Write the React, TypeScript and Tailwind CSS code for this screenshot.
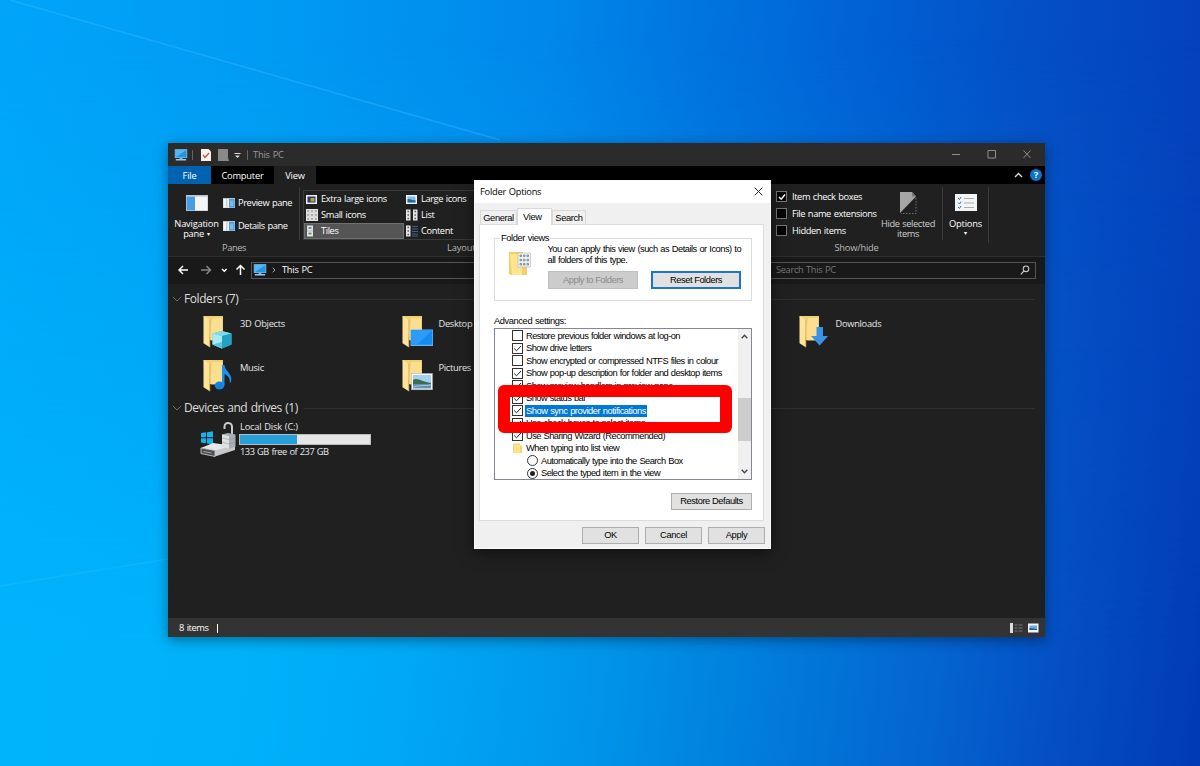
import type { ReactNode } from 'react';
import clsx from 'clsx';

const settings = [
    { id: 1, label: 'Restore previous folder windows at log-on', checked: false },
    { id: 2, label: 'Show drive letters', checked: true },
    { id: 3, label: 'Show encrypted or compressed NTFS files in colour', checked: false },
    { id: 4, label: 'Show pop-up description for folder and desktop items', checked: true },
    { id: 5, label: 'Show preview handlers in preview pane', checked: true },
    { id: 6, label: 'Show status bar', checked: true },
    { id: 7, label: 'Show sync provider notifications', checked: true, selected: true },
    { id: 8, label: 'Use check boxes to select items', checked: true },
    { id: 9, label: 'Use Sharing Wizard (Recommended)', checked: true }
];

function PcIcon({ className }: { className?: string }) {
    return (
        <svg viewBox="0 0 14 12" className={className}>
            <rect x="0.8" y="0.3" width="12.4" height="8.6" fill="#a9d6f2" />
            <rect x="1.3" y="0.8" width="11.4" height="7.6" fill="#2593e0" />
            <path d="M1.3 8.4V.8h11.4z" fill="#52b7f5" />
            <path d="M5.5 9h3v1.3h-3z" fill="#6db6df" />
            <path d="M1.8 10h10.4v1.5H1.8z" fill="#8fcdf0" />
        </svg>
    );
}

function PaneIcon({ flip, className }: { flip?: boolean; className?: string }) {
    return (
        <svg viewBox="0 0 22 16" className={className} preserveAspectRatio="none">
            <rect width="22" height="16" fill="#b9c4cd" />
            <rect x="0.6" y="1.6" width="20.8" height="13.8" fill="#f3f5f7" />
            <rect x={flip ? 11 : 0.6} y="1.6" width={flip ? 10.4 : 8.4} height="13.8" fill="#4a9be0" />
            {flip && <path d="M7 2v13" stroke="#8a949c" />}
            {flip && <path d="M13 4h6v9h-6z" fill="#79bdf0" />}
        </svg>
    );
}

function PictureIcon({ dark }: { dark?: boolean }) {
    return (
        <svg viewBox="0 0 11 9" className="w-[11px] h-[9px]">
            <rect width="11" height="9" fill="#eef2f5" />
            <rect x="1.5" y="1.5" width="8" height="6" fill={dark ? '#31336b' : '#7dbdec'} />
            {dark
                ? <path d="M4.5 3h4v3.5h-4z" fill="#b8a63c" />
                : <path d="M1.5 4.2c3-.5 4 1.6 8 1v2.3h-8z" fill="#23699c" />}
        </svg>
    );
}

function GridIcon() {
    return (
        <svg viewBox="0 0 12 12" className="w-3 h-3">
            <rect width="12" height="12" fill="#e7e7e7" />
            {[2, 6, 10].map((y) => [2, 6, 10].map((x) => (
                <rect key={`${x}-${y}`} x={x - 0.7} y={y - 0.7} width="1.4" height="1.4" fill="#6b7177" />
            )))}
            <path d="M4 0v12M8 0v12M0 4h12M0 8h12" stroke="#b5b5b5" strokeWidth="0.4" />
        </svg>
    );
}

function ListIcon({ kind }: { kind: 'list' | 'tiles' | 'content' }) {
    return (
        <svg viewBox="0 0 12 12" className="w-3 h-3">
            <rect x={kind === 'tiles' ? 1 : 0} y="0.5" width={kind === 'tiles' ? 6 : 4.5} height="11" fill="#e4e4e4" />
            {kind !== 'tiles' && <path d="M1.500 2.500h1.500M1.500 6h1.500M1.500 9.500h1.500" stroke="#56616b" strokeWidth="1.300" />}
            {kind === 'list' && <path d="M7 .5h4.500v11H7z" fill="#e4e4e4" />}
            {kind === 'list' && <path d="M8.500 2.500h1.500M8.500 6h1.500M8.500 9.500h1.500" stroke="#56616b" strokeWidth="1.300" />}
            {kind === 'tiles' && <path d="M2.500 3h3" stroke="#4a7fb0" strokeWidth="1.600" />}
            {kind === 'tiles' && <path d="M2.500 8.500h3" stroke="#4d8d5c" strokeWidth="1.600" />}
            {kind === 'tiles' && <path d="M1 6h6" stroke="#999" strokeWidth="0.600" />}
            {kind === 'content' && <path d="M6 1.500h6M6 4h6M6 6.500h6M6 9h6M6 11h6" stroke="#506f9b" strokeWidth="0.800" />}
        </svg>
    );
}

function FolderIcon({ children }: { children?: ReactNode }) {
    return (
        <svg viewBox="0 0 34 34" className="w-[34px] h-[34px] shrink-0">
            <path d="M1.5 1h19.5v24.500H9z" fill="#f1cf74" />
            <path d="M10 3h10v22H8z" fill="#fadf91" />
            <path d="M1.500 1 7.800 4.600V32.300L1.500 28.300z" fill="#ffe39a" />
            <path d="M7.800 4.600V32.300" stroke="#dcb04f" strokeWidth="0.8" />
            {children}
        </svg>
    );
}

const folders = [
    {
        name: '3D Objects',
        place: 'col-start-1',
        art: (
            <>
                <path d="M10.500 18.500 20 16l9.500 2.500v11L20 33.500l-9.500-4z" fill="#3bb7d3" />
                <path d="M10.500 18.500 20 16l9.500 2.500L20 21z" fill="#7fdbea" />
                <path d="M10.500 18.500 20 21v12.500l-9.500-4z" fill="#a9eaf3" />
                <path d="M20 21l9.500-2.500v11L20 33.500z" fill="#23a1c3" />
                <path d="M10.500 29.500 20 27v6.500z" fill="#58c6dc" />
            </>
        )
    },
    {
        name: 'Desktop',
        place: 'col-start-2',
        art: (
            <>
                <rect x="9.500" y="14.500" width="22.500" height="16.500" fill="#5db6f8" />
                <rect x="10.300" y="15.200" width="21" height="14.500" fill="#148bf0" />
                <path d="M10.300 15.200h21L16 29.700h-5.700z" fill="#2c9cf8" />
            </>
        )
    },
    {
        name: 'Downloads',
        place: 'col-start-4',
        art: <path d="M18.500 12h6.500v9h5L21.700 30.500 13 21h5.500z" fill="#3a92e8" />
    },
    {
        name: 'Music',
        place: 'col-start-1',
        art: (
            <>
                <ellipse cx="17.500" cy="26.500" rx="4.800" ry="4" fill="#1183e0" />
                <path d="M20 6h2.500c.5 6 7 8 6.800 14.500 0 2-.8 3-1.500 4 .4-5-1.300-7.500-5.300-9.500v11.500H20z" fill="#1b8fec" />
            </>
        )
    },
    {
        name: 'Pictures',
        place: 'col-start-2',
        art: (
            <>
                <rect x="10.500" y="14.500" width="21" height="16.300" fill="#f4f6f7" stroke="#a9afb2" strokeWidth="0.500" />
                <rect x="12" y="16" width="18" height="13.300" fill="#a5d0f0" />
                <path d="M12 21c4-3 9 2 18 3v2H12z" fill="#3d6d50" />
                <path d="M12 25h18v4.300H12z" fill="#5f92b4" />
                <path d="M12 28c7-2 12-1 18-2" stroke="#b9d1df" strokeWidth="0.800" fill="none" />
            </>
        )
    }
];

function DriveIcon() {
    return (
        <svg viewBox="0 0 36 36" className="w-9 h-9 shrink-0">
            <path d="M1 11l5-.7v5H1zM7 10.200l6-.9v6H7zM1 16.300h5v5L1 20.600zM7 16.300h6v6l-6-.9z" fill="#16b1ee" />
            <path d="M1 26l12-5 22 3-18 5z" fill="#e6e7e8" />
            <path d="M1 26l14 2.500v6L1 31.500z" fill="#4a4d50" stroke="#c7c9cb" strokeWidth="0.900" />
            <path d="M15 28.500 35 23v5l-20 6.500z" fill="#c6c9cb" />
            <path d="M3.500 29.500l8 1.500" stroke="#aab0b5" strokeWidth="0.900" />
            <path d="M24.500 7V4.500c0-5 7.500-4.500 7.500.5v7" fill="none" stroke="#c9ccce" strokeWidth="2" />
            <path d="M22 12.500 28 11l7.500 1.500v12L29 27l-7-3z" fill="#a9aeb2" />
            <path d="M22 12.500l7 1.700V27l-7-3z" fill="#dfe2e4" />
            <path d="M22 16l7 1.500 6.500-1.500M22 20l7 2 6.500-2" stroke="#8f9599" strokeWidth="0.600" fill="none" />
        </svg>
    );
}

function RibbonCheck({ label, checked }: { label: string; checked?: boolean }) {
    return (
        <div className="flex items-center h-[17px] gap-[5px]">
            <span className="w-[11px] h-[11px] shrink-0 bg-black border border-[#777] flex items-center justify-center">
                {checked && (
                    <svg viewBox="0 0 8 8" className="w-2 h-2" fill="none" stroke="#fff" strokeWidth="1.4">
                        <path d="M1 4l2.200 2.200L7 1.500" />
                    </svg>
                )}
            </span>
            <span>{label}</span>
        </div>
    );
}

function ViewOption({ icon, label, selected }: { icon: ReactNode; label: string; selected?: boolean }) {
    return (
        <div className={clsx('flex items-center h-4 pl-px border', selected ? 'bg-[#555] border-[#707070]' : 'border-transparent')}>
            <span className="w-[15px] flex">{icon}</span>
            <span>{label}</span>
        </div>
    );
}

function GroupHeader({ title }: { title: string }) {
    return (
        <div className="flex items-center h-4 pl-1 pr-2.5">
            <svg viewBox="0 0 10 6" className="w-[10px] h-[6px] mr-[2px]" fill="none" stroke="#777" strokeWidth="0.9">
                <path d="M.8.8 5 5 9.200.8" />
            </svg>
            <span className="text-[12px] text-[#dedede] tracking-[-0.42px]">{title}</span>
            <span className="flex-1 h-px bg-[#303030] ml-1.5" />
        </div>
    );
}

function DialogButton({ label, className }: { label: string; className: string }) {
    return (
        <button type="button" className={clsx('flex items-center justify-center', className)}>{label}</button>
    );
}

function Explorer() {
    return (
        <div className="absolute left-[168px] top-[143px] w-[877px] h-[494px] flex flex-col bg-[#202020] text-white text-[9.3px] leading-[10px] tracking-[-0.4px] [word-spacing:0.7px] shadow-[0_3px_12px_rgba(0,0,0,0.4)] whitespace-nowrap">
            {/* Title bar */}
            <div className="h-[23px] bg-[#2b2b2b] flex items-center pl-1.5 pr-[14px]">
                <PcIcon className="w-[14px] h-3" />
                <span className="w-px h-[10px] bg-[#666] ml-[4px]" />
                <svg viewBox="0 0 10 12" className="w-[10px] h-3 ml-2">
                    <path d="M0 0h7.500L10 2.500V12H0z" fill="#f6f3f1" />
                    <path d="M2 6l2 2.500L8 4" fill="none" stroke="#cf4b39" strokeWidth="1.300" />
                </svg>
                <svg viewBox="0 0 11 12" className="w-[11px] h-3 ml-[7px]">
                    <path d="M0 0h10v9l1 3H0z" fill="#898989" />
                </svg>
                <svg viewBox="0 0 7 6" className="w-[7px] h-[6px] ml-[5px] mt-0.5">
                    <path d="M.5.5h6" stroke="#ddd" />
                    <path d="M1 2.500h5L3.500 5z" fill="#ddd" />
                </svg>
                <span className="w-px h-[10px] bg-[#666] ml-[6px]" />
                <span className="ml-[5px] text-[#9b9b9b] tracking-[-0.2px]">This PC</span>
                <svg viewBox="0 0 80 10" className="w-20 h-[10px] ml-auto -mt-px" fill="none" stroke="#9a9a9a" strokeWidth="0.9">
                    <path d="M1 5.500h8M37 1.500h7.500v7.500H37zM72.500 1.500l7 7.500M79.500 1.500l-7 7.500" />
                </svg>
            </div>

            {/* Tabs */}
            <div className="h-[18px] bg-black flex items-stretch tracking-[-0.2px]">
                <div className="w-[43px] bg-[#0063b1] flex items-center justify-center pt-px">File</div>
                <div className="w-[63px] flex items-center justify-center pt-px">Computer</div>
                <div className="w-[42px] bg-[#202020] flex items-center justify-center pt-px">View</div>
                <div className="ml-auto flex items-center gap-[7px] pr-[3px]">
                    <svg viewBox="0 0 9 6" className="w-[9px] h-[6px]" fill="none" stroke="#ddd" strokeWidth="1.400">
                        <path d="M1 5l3.500-3.500L8 5" />
                    </svg>
                    <span className="w-3 h-3 rounded-full bg-[#0f74c8] flex items-center justify-center font-bold text-[9px]">?</span>
                </div>
            </div>

            {/* Ribbon */}
            <div className="h-[73px] flex border-b border-[#2e2e2e] pt-[3px] pb-[3px]">
                <div className="w-[132px] flex flex-col">
                    <div className="flex h-[56px] border-r border-[#3a3a3a]">
                        <div className="w-[55px] flex flex-col items-center text-center pt-2 pl-[2px] tracking-[-0.2px]">
                            <PaneIcon className="w-[22px] h-4" />
                            <p className="mt-2">
                                Navigation<br />pane <span className="inline-block text-[6px] leading-[6px] -translate-y-px">▾</span>
                            </p>
                        </div>
                        <div className="flex flex-col pt-[11px] gap-[13px]">
                            <div className="flex items-center gap-[3px]"><PaneIcon flip className="w-3 h-[10px]" />Preview pane</div>
                            <div className="flex items-center gap-[3px]"><PaneIcon flip className="w-3 h-[10px]" />Details pane</div>
                        </div>
                    </div>
                    <div className="text-center text-[#bbb] pt-[3px]">Panes</div>
                </div>
                <div className="w-[470px] flex flex-col pl-[3px]">
                    <div className="h-[56px] pt-[3px]">
                        <div className="grid grid-cols-[100px_1fr] border border-[#3a3a3a] h-[50px]">
                            <ViewOption icon={<PictureIcon dark />} label="Extra large icons" />
                            <ViewOption icon={<PictureIcon />} label="Large icons" />
                            <ViewOption icon={<GridIcon />} label="Small icons" />
                            <ViewOption icon={<ListIcon kind="list" />} label="List" />
                            <ViewOption icon={<ListIcon kind="tiles" />} label="Tiles" selected />
                            <ViewOption icon={<ListIcon kind="content" />} label="Content" />
                        </div>
                    </div>
                    <div className="pl-[144px] text-[#bbb] pt-[3px] tracking-[-0.15px]">Layout</div>
                </div>
                <div className="w-[173px] flex flex-col">
                    <div className="h-[56px] flex border-r border-[#3a3a3a]">
                        <div className="w-[104px] flex flex-col pl-[6px] pt-px">
                            <RibbonCheck label="Item check boxes" checked />
                            <RibbonCheck label="File name extensions" />
                            <RibbonCheck label="Hidden items" />
                        </div>
                        <div className="flex-1 flex flex-col items-center text-center text-[#cfcfcf] pt-[4px]">
                            <svg viewBox="0 0 18 24" className="w-[18px] h-6">
                                <path d="M1 1h12l4 4.500L1 22z" fill="#a5a5a5" />
                                <path d="M13 1v4.500h4" fill="#777" />
                                <path d="M17 7v15.500H2" stroke="#888" strokeDasharray="1.500 1.500" strokeWidth="0.800" fill="none" />
                            </svg>
                            <p className="mt-1">Hide selected<br />items</p>
                        </div>
                    </div>
                    <div className="text-center text-[#bbb] pt-[3px] tracking-[-0.2px]">Show/hide</div>
                </div>
                <div className="w-[46px] h-[56px] border-r border-[#3a3a3a] flex flex-col items-center pt-[7px]">
                    <svg viewBox="0 0 22 17" className="w-[22px] h-[17px]">
                        <rect width="22" height="17" fill="#f3f5f6" />
                        <path d="M3 4l1.500 1.500L6 3M3 8.500 4.500 10 6 7.500M3 13l1.500 1.500L6 12" stroke="#2878bd" fill="none" />
                        <path d="M9 4.500h10M9 9h10M9 13.500h10" stroke="#9fa5aa" strokeWidth="0.900" />
                    </svg>
                    <span className="mt-2 tracking-[-0.2px]">Options</span>
                    <span className="text-[6px] leading-[8px]">▾</span>
                </div>
            </div>

            {/* Address bar */}
            <div className="h-[27px] bg-[#191919] flex items-center pl-[10px] pr-[9px] pb-px">
                <svg viewBox="0 0 68 12" className="w-[68px] h-3 mr-[5px]" fill="none" stroke="#fff" strokeWidth="1.500">
                    <path d="M10 6H1.500M5 2 1 6l4 4" />
                    <path d="M23 6h9M28.500 2l4 4-4 4" stroke="#858585" />
                    <path d="M44 5l2.300 2.300L48.600 5" />
                    <path d="M62.500 11V1.500M58.500 5.500l4-4 4 4" />
                </svg>
                <div className="w-[516px] h-[17px] border border-[#555] flex items-center pl-[1px]">
                    <PcIcon className="w-[14px] h-3" />
                    <svg viewBox="0 0 4 6" className="w-1 h-[6px] ml-[5px]" fill="none" stroke="#aaa">
                        <path d="M.7.7 3 3 .7 5.300" />
                    </svg>
                    <span className="ml-[6px] tracking-[-0.25px]">This PC</span>
                </div>
                <div className="flex-1 h-[17px] border border-[#555] border-l-0 flex items-center justify-between pl-[9px] pr-[5px] text-[#777] tracking-[-0.35px]">
                    Search This PC
                    <svg viewBox="0 0 10 10" className="w-[10px] h-[10px]" fill="none" stroke="#ccc" strokeWidth="1.100">
                        <circle cx="6" cy="3.800" r="2.800" />
                        <path d="M4 6 .8 9.300" />
                    </svg>
                </div>
            </div>

            {/* Folders and drives */}
            <div className="flex-1 pt-[7px] text-[#e8e8e8]">
                <GroupHeader title="Folders (7)" />
                <div className="grid grid-cols-[repeat(4,198.500px)] grid-rows-[44px_36px] pt-2 pl-[34px] tracking-[-0.3px]">
                    {folders.map((folder) => (
                        <div key={folder.name} className={clsx('flex gap-1', folder.place)}>
                            <FolderIcon>{folder.art}</FolderIcon>
                            <span className="pt-[4px]">{folder.name}</span>
                        </div>
                    ))}
                </div>
                <div className="pt-[5px]">
                    <GroupHeader title="Devices and drives (1)" />
                </div>
                <div className="flex pl-[32px] pt-[6px] gap-[4px]">
                    <DriveIcon />
                    <div className="flex flex-col">
                        <span className="tracking-[-0.2px]">Local Disk (C:)</span>
                        <span className="w-[132px] h-[11px] bg-[#e6e6e6] border border-[#bcbcbc] mt-0.5 mb-[2px] -ml-[1.5px] flex">
                            <span className="w-[57px] bg-[#26a0da]" />
                        </span>
                        <span className="tracking-[-0.5px]">133 GB free of 237 GB</span>
                    </div>
                </div>
            </div>

            {/* Status bar */}
            <div className="h-[19px] bg-[#333] flex items-center pl-[11px] pr-[6px] pt-px">
                <span>8 items</span>
                <span className="w-px h-[9px] bg-white ml-2" />
                <svg viewBox="0 0 30 10" className="w-[30px] h-[10px] ml-auto">
                    <path d="M1 0h3v10H1z" fill="#ddd" />
                    <path d="M5.500 2h3M9.500 2h4M5.500 5h3M9.500 5h4M5.500 8h3M9.500 8h4" stroke="#777" />
                    <path d="M19 .5h10.500v9H19z" fill="#f0f5f8" />
                    <path d="M20.500 2.500h7.500v4.500h-7.500z" fill="#69ace0" />
                    <path d="M20.500 5c3 0 4 1 7.500 1v1h-7.500z" fill="#225c89" />
                </svg>
            </div>
        </div>
    );
}

function FolderOptions() {
    return (
        <div className="absolute left-[474px] top-[180px] w-[297px] h-[369px] flex flex-col bg-[#f0f0f0] border border-[#fafafa] text-black text-[9.3px] leading-[10.5px] tracking-[-0.54px] [word-spacing:0.6px] font-['Liberation_Sans',Arial,sans-serif] shadow-[0_4px_14px_rgba(0,0,0,0.5)] whitespace-nowrap">
            <div className="h-[22px] bg-white flex items-center justify-between pl-[5px] pr-[7px] font-['Open_Sans',sans-serif] tracking-[-0.25px]">
                Folder Options
                <svg viewBox="0 0 9 9" className="w-[9px] h-[9px] -mt-[2px]" fill="none" stroke="#222" strokeWidth="1">
                    <path d="M.7.7 8.300 8.300M8.300.7.7 8.300" />
                </svg>
            </div>

            <div className="flex items-end h-[21px] pl-[5px] tracking-[-0.35px]">
                <div className="w-[37px] h-[14px] border border-b-0 border-[#d9d9d9] flex items-center justify-center pt-px">General</div>
                <div className="w-[35px] h-[17px] bg-white border border-b-0 border-[#d9d9d9] flex items-center pl-[5px] -mb-px relative">View</div>
                <div className="w-[34px] h-[14px] border border-b-0 border-[#d9d9d9] flex items-center justify-center pt-px">Search</div>
            </div>

            <div className="ml-1 mr-[6px] h-[297px] bg-white border border-[#dcdcdc] pl-[14px] pr-[11px] flex flex-col items-start">
                <fieldset className="mt-[8px] w-[258px] h-[68px] border border-[#dcdcdc] px-0">
                    <legend className="ml-[5px] px-[1px] leading-[10px] tracking-[-0.4px]">Folder views</legend>
                    <div className="flex pl-[14px]">
                        <svg viewBox="0 0 23 26" className="w-[23px] h-[26px] mt-[8px]">
                            <path d="M0 1h14v3h4v20H2l-2-1z" fill="#f2cf68" />
                            <path d="M1 3l12 0v21H3z" fill="#ffe591" />
                            <rect x="9" y="2" width="12.500" height="14" fill="#eceff1" stroke="#aaa" strokeWidth="0.500" />
                            <path d="M11 4h1.500v1.500H11zM14.500 4H16v1.500h-1.500zM18 4h1.500v1.500H18zM11 8.300h1.500v1.500H11zM14.500 8.300H16v1.500h-1.500zM18 8.300h1.500v1.500H18zM11 12.500h1.500V14H11zM14.500 12.500H16V14h-1.500zM18 12.500h1.500V14H18z" fill="none" stroke="#60717e" strokeWidth="0.700" />
                        </svg>
                        <div className="ml-[16px] mt-[1px]">
                            <p className="tracking-[-0.5px] -ml-[0.5px]">You can apply this view (such as Details or Icons) to<br />all folders of this type.</p>
                            <div className="flex gap-[13px] mt-[6px] tracking-[-0.45px]">
                                <DialogButton label="Apply to Folders" className="w-[90px] h-[18px] bg-[#ccc] border border-[#bfbfbf] text-[#8b8b8b]" />
                                <DialogButton label="Reset Folders" className="w-[90px] h-[18px] bg-[#e1e1e1] border-2 border-[#1a76cf]" />
                            </div>
                        </div>
                    </div>
                </fieldset>

                <p className="mt-[15px] tracking-[-0.4px]">Advanced settings:</p>
                <div className="mt-[1px] w-[258px] h-[152px] border border-[#828790] flex justify-between overflow-hidden">
                    <div className="pl-[17px] pt-px">
                        {settings.map((item) => (
                            <div key={item.id} className="h-[12.5px] flex items-center">
                                <span className="w-[11px] h-[11px] border border-[#333] bg-white flex items-center justify-center shrink-0">
                                    {item.checked && (
                                        <svg viewBox="0 0 9 9" className="w-[9px] h-[9px]" fill="none" stroke="#222">
                                            <path d="M1.200 4.500l2.300 2.300L8 2" />
                                        </svg>
                                    )}
                                </span>
                                <span className={clsx('ml-[2px] px-[1px] h-[12.5px] flex items-center', item.selected && 'bg-[#0078d7] text-white tracking-[-0.46px]')}>{item.label}</span>
                            </div>
                        ))}
                        <div className="h-[12.5px] flex items-center">
                            <svg viewBox="0 0 11 11" className="w-[11px] h-[11px]">
                                <path d="M1 .5h7v2h2V10H2L1 9.500z" fill="#f4d270" />
                                <path d="M1.500 1.500h6.500V10H2z" fill="#ffe28a" />
                            </svg>
                            <span className="ml-[3px] tracking-[-0.52px]">When typing into list view</span>
                        </div>
                        <div className="h-[12.5px] flex items-center pl-[15px]">
                            <span className="w-[11px] h-[11px] rounded-full border border-[#333]" />
                            <span className="ml-[3px]">Automatically type into the Search Box</span>
                        </div>
                        <div className="h-[12.5px] flex items-center pl-[15px]">
                            <span className="w-[11px] h-[11px] rounded-full border border-[#333] flex items-center justify-center">
                                <span className="w-[5px] h-[5px] rounded-full bg-[#222]" />
                            </span>
                            <span className="ml-[3px]">Select the typed item in the view</span>
                        </div>
                    </div>
                    <div className="w-[13px] bg-[#f0f0f0] flex flex-col items-center py-[5px]">
                        <svg viewBox="0 0 7 5" className="w-[7px] h-[5px]" fill="none" stroke="#444" strokeWidth="1.300">
                            <path d="M.7 4.200 3.500 1.200l2.800 3" />
                        </svg>
                        <span className="w-full h-[43px] bg-[#cdcdcd] mt-[59px]" />
                        <svg viewBox="0 0 7 5" className="w-[7px] h-[5px] mt-auto" fill="none" stroke="#444" strokeWidth="1.300">
                            <path d="M.7.8l2.800 3 2.800-3" />
                        </svg>
                    </div>
                </div>
                <DialogButton label="Restore Defaults" className="ml-auto mt-[13px] w-[81px] h-[17px] bg-[#e1e1e1] border border-[#adadad] tracking-[-0.42px]" />
            </div>

            <div className="flex justify-end gap-[6px] pr-[5px] pt-[6px] tracking-[-0.35px]">
                <DialogButton label="OK" className="w-[57px] h-[17px] bg-[#e1e1e1] border border-[#adadad]" />
                <DialogButton label="Cancel" className="w-[57px] h-[17px] bg-[#e1e1e1] border border-[#adadad]" />
                <DialogButton label="Apply" className="w-[57px] h-[17px] bg-[#e1e1e1] border border-[#adadad]" />
            </div>
        </div>
    );
}

export default function App() {
    return (
        <div className="relative w-[1200px] h-[766px] overflow-hidden font-['Open_Sans','Noto_Sans',sans-serif] bg-[linear-gradient(96deg,#00a5fa_0%,#009af3_22%,#0088ea_43%,#0074df_55%,#0061d4_68%,#0450c6_80%,#043cb8_100%)]">
            {/* the wallpaper gets lighter towards the bottom */}
            <div className="absolute inset-0 bg-[linear-gradient(98deg,#00b5fc_0%,#00b2fa_25%,#00a8f5_38%,#0096eb_52%,#0080de_64%,#0464d0_79%,#044dc2_89%,#003ab4_100%)] [mask-image:linear-gradient(to_bottom,transparent_5%,black_85%)]" />
            {/* light beams */}
            <svg viewBox="0 0 1200 766" className="absolute inset-0 w-full h-full">
                <path d="M10 0 500 140" stroke="#4bbcff" strokeOpacity="0.35" strokeWidth="1.500" />
                <path d="M0 586l168-27" stroke="#3cc4ff" strokeOpacity="0.250" strokeWidth="1.500" />
            </svg>
            <Explorer />
            <FolderOptions />
            <div className="absolute left-[498px] top-[385px] w-[234px] h-[48px] border-[12px] border-b-[11px] border-[#fe0000] rounded-[6px]" />
        </div>
    );
}
